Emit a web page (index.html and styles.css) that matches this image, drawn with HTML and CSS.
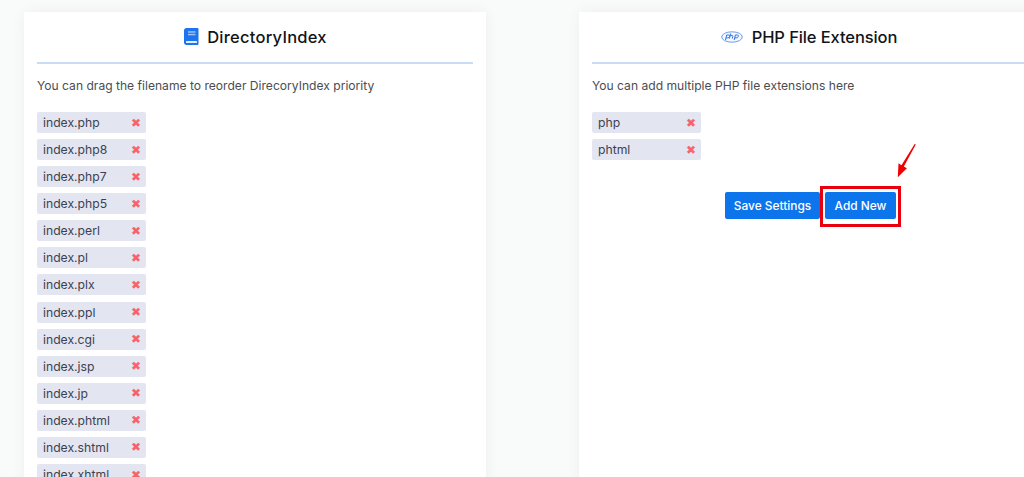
FILE: index.html
```html
<!DOCTYPE html>
<html lang="en">
<head>
<meta charset="utf-8">
<title>LiteSpeed PHP settings</title>
<link rel="stylesheet" href="styles.css">
</head>
<body>
<main class="page">
  <section class="card">
    <h2 class="card-title title-dir">
      <svg class="icon-book" viewBox="0 0 15 17" aria-hidden="true"><path fill="#1c74f0" d="M2.5 0H13.2c.8 0 1.3.5 1.3 1.3v14.4c0 .8-.5 1.3-1.3 1.3H2.5C1 17 0 16 0 14.5v-12C0 1 1 0 2.5 0z"/><rect x="4" y="3.2" width="7.5" height="1.5" fill="#9cc3f7"/><rect x="4" y="5.8" width="7.5" height="1.5" fill="#9cc3f7"/><rect x="2" y="13" width="11" height="2" rx=".6" fill="#e4effd"/></svg>
      <span>DirectoryIndex</span>
    </h2>
    <p class="hint">You can drag the filename to reorder DirecoryIndex priority</p>
    <ul class="tags">
      <li class="tag"><span>index.php</span><b class="x">✖</b></li>
      <li class="tag"><span>index.php8</span><b class="x">✖</b></li>
      <li class="tag"><span>index.php7</span><b class="x">✖</b></li>
      <li class="tag"><span>index.php5</span><b class="x">✖</b></li>
      <li class="tag"><span>index.perl</span><b class="x">✖</b></li>
      <li class="tag"><span>index.pl</span><b class="x">✖</b></li>
      <li class="tag"><span>index.plx</span><b class="x">✖</b></li>
      <li class="tag"><span>index.ppl</span><b class="x">✖</b></li>
      <li class="tag"><span>index.cgi</span><b class="x">✖</b></li>
      <li class="tag"><span>index.jsp</span><b class="x">✖</b></li>
      <li class="tag"><span>index.jp</span><b class="x">✖</b></li>
      <li class="tag"><span>index.phtml</span><b class="x">✖</b></li>
      <li class="tag"><span>index.shtml</span><b class="x">✖</b></li>
      <li class="tag"><span>index.xhtml</span><b class="x">✖</b></li>
    </ul>
  </section>
  <section class="card">
    <h2 class="card-title title-php">
      <svg class="icon-php" viewBox="0 0 22 12" aria-hidden="true"><ellipse cx="11" cy="6" rx="10.3" ry="5.2" fill="#f4f8fe" stroke="#5b93ea" stroke-width=".9"/><path fill="none" stroke="#2f74e0" stroke-width="1" d="M4.5 9l1.2-5h2c1 0 1.2.8.8 1.7-.3.8-1 1.2-2 1.2H5.2M9.6 2.5L8.4 7.6M9.2 4.4h1.8c.7 0 .9.4.8 1l-.5 2.2M13.2 9l1.2-5h2c1 0 1.2.8.8 1.7-.3.8-1 1.2-2 1.2h-1.3"/></svg>
      <span>PHP File Extension</span>
    </h2>
    <p class="hint">You can add multiple PHP file extensions here</p>
    <ul class="tags">
      <li class="tag"><span>php</span><b class="x">✖</b></li>
      <li class="tag"><span>phtml</span><b class="x">✖</b></li>
    </ul>
    <div class="actions">
      <button class="btn btn-save" type="button">Save Settings</button>
      <div class="marked">
        <button class="btn btn-add" type="button">Add New</button>
        <span class="marker"></span>
      </div>
    </div>
    <svg class="arrow" viewBox="0 0 20 36" aria-hidden="true"><path fill="#f00000" d="M18.6 0.5l1.2.7L7.2 24.2l3.2 1.9L0.8 35.5 1.6 21l3.1 1.9z"/></svg>
  </section>
</main>
</body>
</html>
```
FILE: styles.css
```css
* { box-sizing: border-box; }
html, body { margin: 0; height: 100%; overflow: hidden; }
body {
  background: #f9fafa;
  font-family: "Inter", "Open Sans", sans-serif;
  color: #3c4043;
}
.page {
  display: flex;
  gap: 93px;
  padding: 12px 0 0 24px;
  width: 1100px;
}
.card {
  position: relative;
  flex: 0 0 462px;
  height: 700px;
  padding: 0 13px;
  background: #fff;
  box-shadow: 0 0 14px rgba(0, 0, 0, .05);
}
.card-title {
  display: flex;
  align-items: center;
  justify-content: center;
  gap: 8px;
  height: 52px;
  margin: 0;
  padding-bottom: 1px;
  border-bottom: 2px solid #c9dcf5;
  font-size: 16.5px;
  font-weight: 500;
  color: #111418;
}
.title-dir { letter-spacing: .25px; padding-left: 1px; }
.title-php { letter-spacing: -.1px; padding-right: 2px; }
.icon-book { width: 15px; height: 17px; }
.icon-php { width: 22px; height: 12px; margin-right: 1px; }
.hint {
  margin: 0;
  padding-top: 13px;
  height: 48px;
  line-height: 18px;
  font-size: 12.1px;
  color: #494d52;
}
.tags {
  display: flex;
  flex-direction: column;
  gap: 6.08px;
  margin: 0;
  padding: 0;
  list-style: none;
}
.tag {
  display: flex;
  align-items: center;
  justify-content: space-between;
  width: 109px;
  height: 21px;
  padding: 0 6px;
  border-radius: 2px;
  background: #e3e5f0;
  font-size: 12.2px;
  color: #3c4150;
}
.x {
  font-family: "DejaVu Sans", sans-serif;
  font-size: 12px;
  line-height: 1;
  font-weight: 400;
  margin-right: -1px;
  color: #f8636b;
}
.actions {
  display: flex;
  justify-content: center;
  gap: 5px;
  margin-top: 32px;
  padding-left: 1px;
}
.btn {
  height: 27px;
  padding: 0;
  border: 0;
  border-radius: 2px;
  background: #0d75ec;
  color: #fff;
  font: 500 11.9px "Inter", "Open Sans", sans-serif;
}
.btn-save { width: 95px; }
.btn-add { width: 71px; }
.marked { position: relative; display: flex; }
.marker {
  position: absolute;
  inset: -6px -5px -8px;
  border: 3px solid #e8000f;
}
.arrow {
  position: absolute;
  left: 318px;
  top: 131px;
  width: 19px;
  height: 35px;
}
```
